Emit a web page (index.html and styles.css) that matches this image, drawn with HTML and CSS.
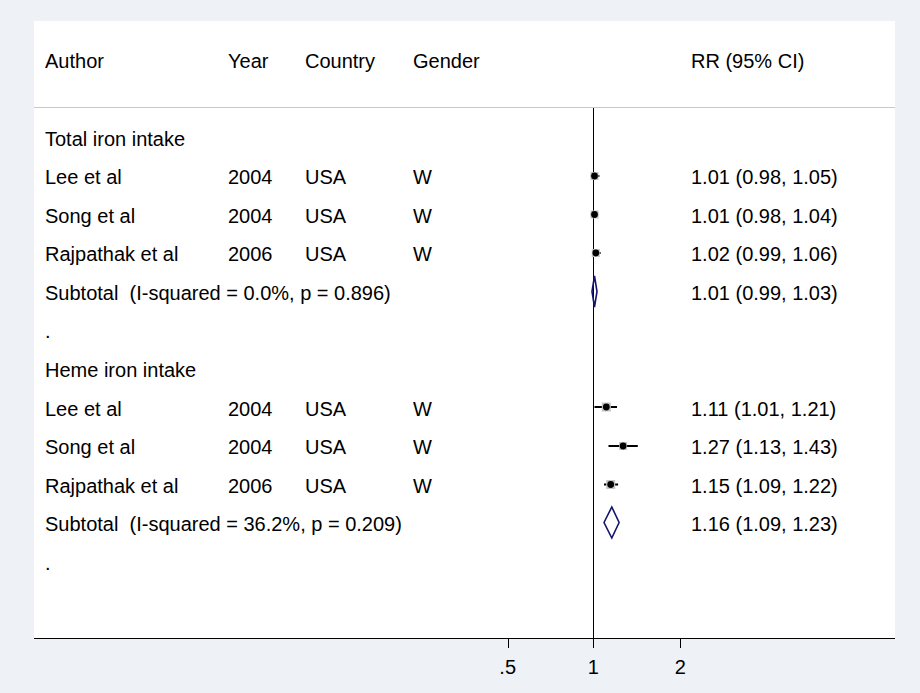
FILE: index.html
```html
<!DOCTYPE html>
<html>
<head>
<meta charset="utf-8">
<link rel="stylesheet" href="styles.css">
</head>
<body>
<div class="figure">
  <div class="plot">
    <div class="header grid">
      <span>Author</span><span>Year</span><span>Country</span><span>Gender</span><span></span><span>RR (95% CI)</span>
    </div>
    <div class="rows">
      <div class="row grid"><span class="span4">Total iron intake</span></div>
      <div class="row grid"><span>Lee et al</span><span>2004</span><span>USA</span><span>W</span><span></span><span>1.01 (0.98, 1.05)</span></div>
      <div class="row grid"><span>Song et al</span><span>2004</span><span>USA</span><span>W</span><span></span><span>1.01 (0.98, 1.04)</span></div>
      <div class="row grid"><span>Rajpathak et al</span><span>2006</span><span>USA</span><span>W</span><span></span><span>1.02 (0.99, 1.06)</span></div>
      <div class="row grid"><span class="span4">Subtotal&nbsp; (I-squared = 0.0%, p = 0.896)</span><span></span><span>1.01 (0.99, 1.03)</span></div>
      <div class="row grid"><span class="span4">.</span></div>
      <div class="row grid"><span class="span4">Heme iron intake</span></div>
      <div class="row grid"><span>Lee et al</span><span>2004</span><span>USA</span><span>W</span><span></span><span>1.11 (1.01, 1.21)</span></div>
      <div class="row grid"><span>Song et al</span><span>2004</span><span>USA</span><span>W</span><span></span><span>1.27 (1.13, 1.43)</span></div>
      <div class="row grid"><span>Rajpathak et al</span><span>2006</span><span>USA</span><span>W</span><span></span><span>1.15 (1.09, 1.22)</span></div>
      <div class="row grid"><span class="span4">Subtotal&nbsp; (I-squared = 36.2%, p = 0.209)</span><span></span><span>1.16 (1.09, 1.23)</span></div>
      <div class="row grid"><span class="span4">.</span></div>
    </div>
    <svg class="marks" width="861" height="617" viewBox="34 21 861 617">
      <line class="nullline" x1="593.5" y1="108" x2="593.5" y2="638"/>
      <!-- Total iron -->
      <line class="ci" x1="590.8" y1="176" x2="599.4" y2="176"/>
      <rect class="wbox" x="590.5" y="172" width="8" height="8"/>
      <circle class="pt" cx="594.5" cy="176" r="3.4"/>
      <line class="ci" x1="590.8" y1="214.5" x2="598.2" y2="214.5"/>
      <rect class="wbox" x="590.5" y="210.5" width="8" height="8"/>
      <circle class="pt" cx="594.5" cy="214.5" r="3.4"/>
      <line class="ci" x1="592" y1="253" x2="600.6" y2="253"/>
      <rect class="wbox" x="591.8" y="249" width="8" height="8"/>
      <circle class="pt" cx="595.8" cy="253" r="3.4"/>
      <polygon class="diamond" points="592,291.5 594.5,276 597,291.5 594.5,307"/>
      <!-- Heme iron -->
      <line class="ci" x1="594.5" y1="407" x2="617" y2="407"/>
      <rect class="wbox" x="601.8" y="402.5" width="9" height="9"/>
      <circle class="pt" cx="606.3" cy="407" r="3.4"/>
      <line class="ci" x1="608.5" y1="446" x2="637.8" y2="446"/>
      <rect class="wbox" x="619.1" y="442" width="8" height="8"/>
      <circle class="pt" cx="623.1" cy="446" r="3.4"/>
      <line class="ci" x1="604" y1="484.5" x2="618.1" y2="484.5"/>
      <rect class="wbox" x="606.2" y="480" width="9" height="9"/>
      <circle class="pt" cx="610.7" cy="484.5" r="3.4"/>
      <polygon class="diamond" points="604,522.5 611.8,507 619.1,522.5 611.8,538"/>
    </svg>
  </div>
  <div class="axis">
    <span class="tick" style="left:473.7px"></span>
    <span class="tick" style="left:559.3px"></span>
    <span class="tick" style="left:646.3px"></span>
    <span class="label" style="left:473.7px">.5</span>
    <span class="label" style="left:559.3px">1</span>
    <span class="label" style="left:646.3px">2</span>
  </div>
</div>
</body>
</html>
```

FILE: styles.css
```css
html, body {
  margin: 0;
  padding: 0;
}
body {
  background: #eef2f7;
  font-family: "Liberation Sans", Arial, sans-serif;
  font-size: 20px;
  color: #000;
  width: 920px;
  height: 693px;
  overflow: hidden;
}
.figure {
  padding-top: 21px;
  padding-left: 34px;
}
.plot {
  position: relative;
  width: 861px;
  height: 617px;
  background: #fff;
  border-bottom: 1px solid #000;
}
.grid {
  display: grid;
  grid-template-columns: 183px 77px 108px 120px 158px auto;
  padding-left: 11px;
  white-space: nowrap;
}
.header {
  box-sizing: border-box;
  height: 87px;
  padding-top: 21px;
  line-height: 38px;
  border-bottom: 1px solid #c8c8c8;
}
.rows {
  padding-top: 11.7px;
}
.row {
  height: 38.55px;
  line-height: 38.55px;
}
.span4 {
  grid-column: 1 / 5;
}
.marks {
  position: absolute;
  left: 0;
  top: 0;
}
.nullline {
  stroke: #000;
  stroke-width: 1;
}
.ci {
  stroke: #000;
  stroke-width: 2;
}
.wbox {
  fill: #c4c4c4;
}
.pt {
  fill: #000;
}
.diamond {
  fill: none;
  stroke: #14146e;
  stroke-width: 1.6;
}
.axis {
  position: relative;
  height: 54px;
}
.tick {
  position: absolute;
  top: 0;
  width: 1px;
  height: 9px;
  background: #000;
}
.label {
  position: absolute;
  top: 18px;
  line-height: 20px;
  transform: translateX(-50%);
}
```
